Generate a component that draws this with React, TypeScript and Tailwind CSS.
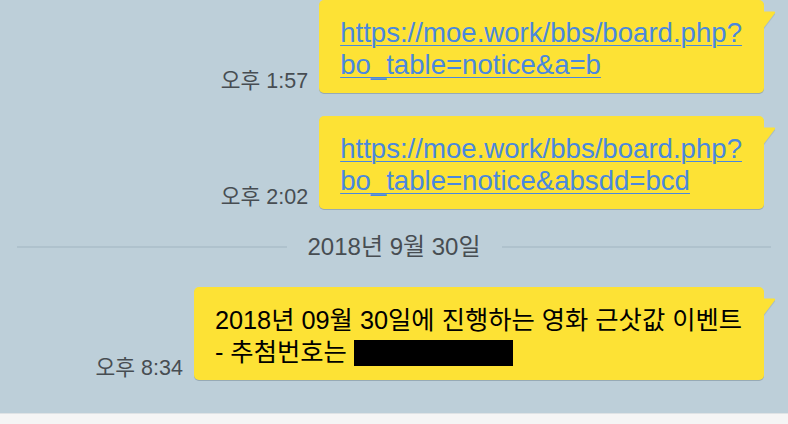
import React from 'react';

const FONT = '"Liberation Sans", "Noto Sans CJK KR", sans-serif';

const Tail = () => (
  <svg
    className="absolute left-full top-[11px]"
    width="13"
    height="19"
    viewBox="0 0 13 19"
  >
    <path d="M0 2 L0 18 L10.5 4.2 Q12 2.5 10 1.5 L0 1.5 Z" fill="#a9bcc7" />
    <path d="M-1 0.5 L10 0.5 Q12 0.8 10.6 2.6 L0 16.5 L-1 16.5 Z" fill="#fde235" />
  </svg>
);

const Bubble = ({ children }: { children: React.ReactNode }) => (
  <div className="relative bg-[#fde235] rounded-[5px] pl-[21px] pr-[22px] pt-[17px] pb-[12px] shadow-[0_1px_0_rgba(80,100,115,0.35)]">
    {children}
    <Tail />
  </div>
);

const Row = ({ time, children }: { time: string; children: React.ReactNode }) => (
  <div className="flex justify-end items-end pr-[24px]">
    <span className="mr-[11px] mb-[1px] text-[21.5px] leading-none text-[#474d52]">{time}</span>
    <Bubble>{children}</Bubble>
  </div>
);

const Link = ({ lines }: { lines: string[] }) => (
  <div className="text-[27.6px] leading-[32px] text-[#4a88de]">
    {lines.map((l) => (
      <div key={l}>
        <span className="underline decoration-1 underline-offset-[3px]">{l}</span>
      </div>
    ))}
  </div>
);

const App = () => {
  return (
    <div className="w-[788px] h-[424px] flex flex-col bg-[#bdcfd9] overflow-hidden" style={{ fontFamily: FONT }}>
      <div className="flex-1 flex flex-col">
        <Row time="오후 1:57">
          <Link lines={['https://moe.work/bbs/board.php?', 'bo_table=notice&a=b']} />
        </Row>
        <div className="h-[23px]" />
        <Row time="오후 2:02">
          <Link lines={['https://moe.work/bbs/board.php?', 'bo_table=notice&absdd=bcd']} />
        </Row>
        <div className="flex items-center px-[17px] pt-[26px] pb-[28px]">
          <div className="flex-1 h-[2px] bg-[#afc2cd]" />
          <span className="mx-[21px] text-[24px] leading-[24px] text-[#474d52]">2018년 9월 30일</span>
          <div className="flex-1 h-[2px] bg-[#afc2cd]" />
        </div>
        <Row time="오후 8:34">
          <div className="text-[25.3px] leading-[32px] text-black">
            <div>2018년 09월 30일에 진행하는 영화 근삿값 이벤트</div>
            <div>
              - 추첨번호는{' '}
              <span className="inline-block w-[159px] h-[26px] bg-black align-[-5px]" />
            </div>
          </div>
        </Row>
      </div>
      <div className="h-[11px] bg-[#f5f5f5] border-t border-[#dfe3e5]" />
    </div>
  );
};

export default App;
